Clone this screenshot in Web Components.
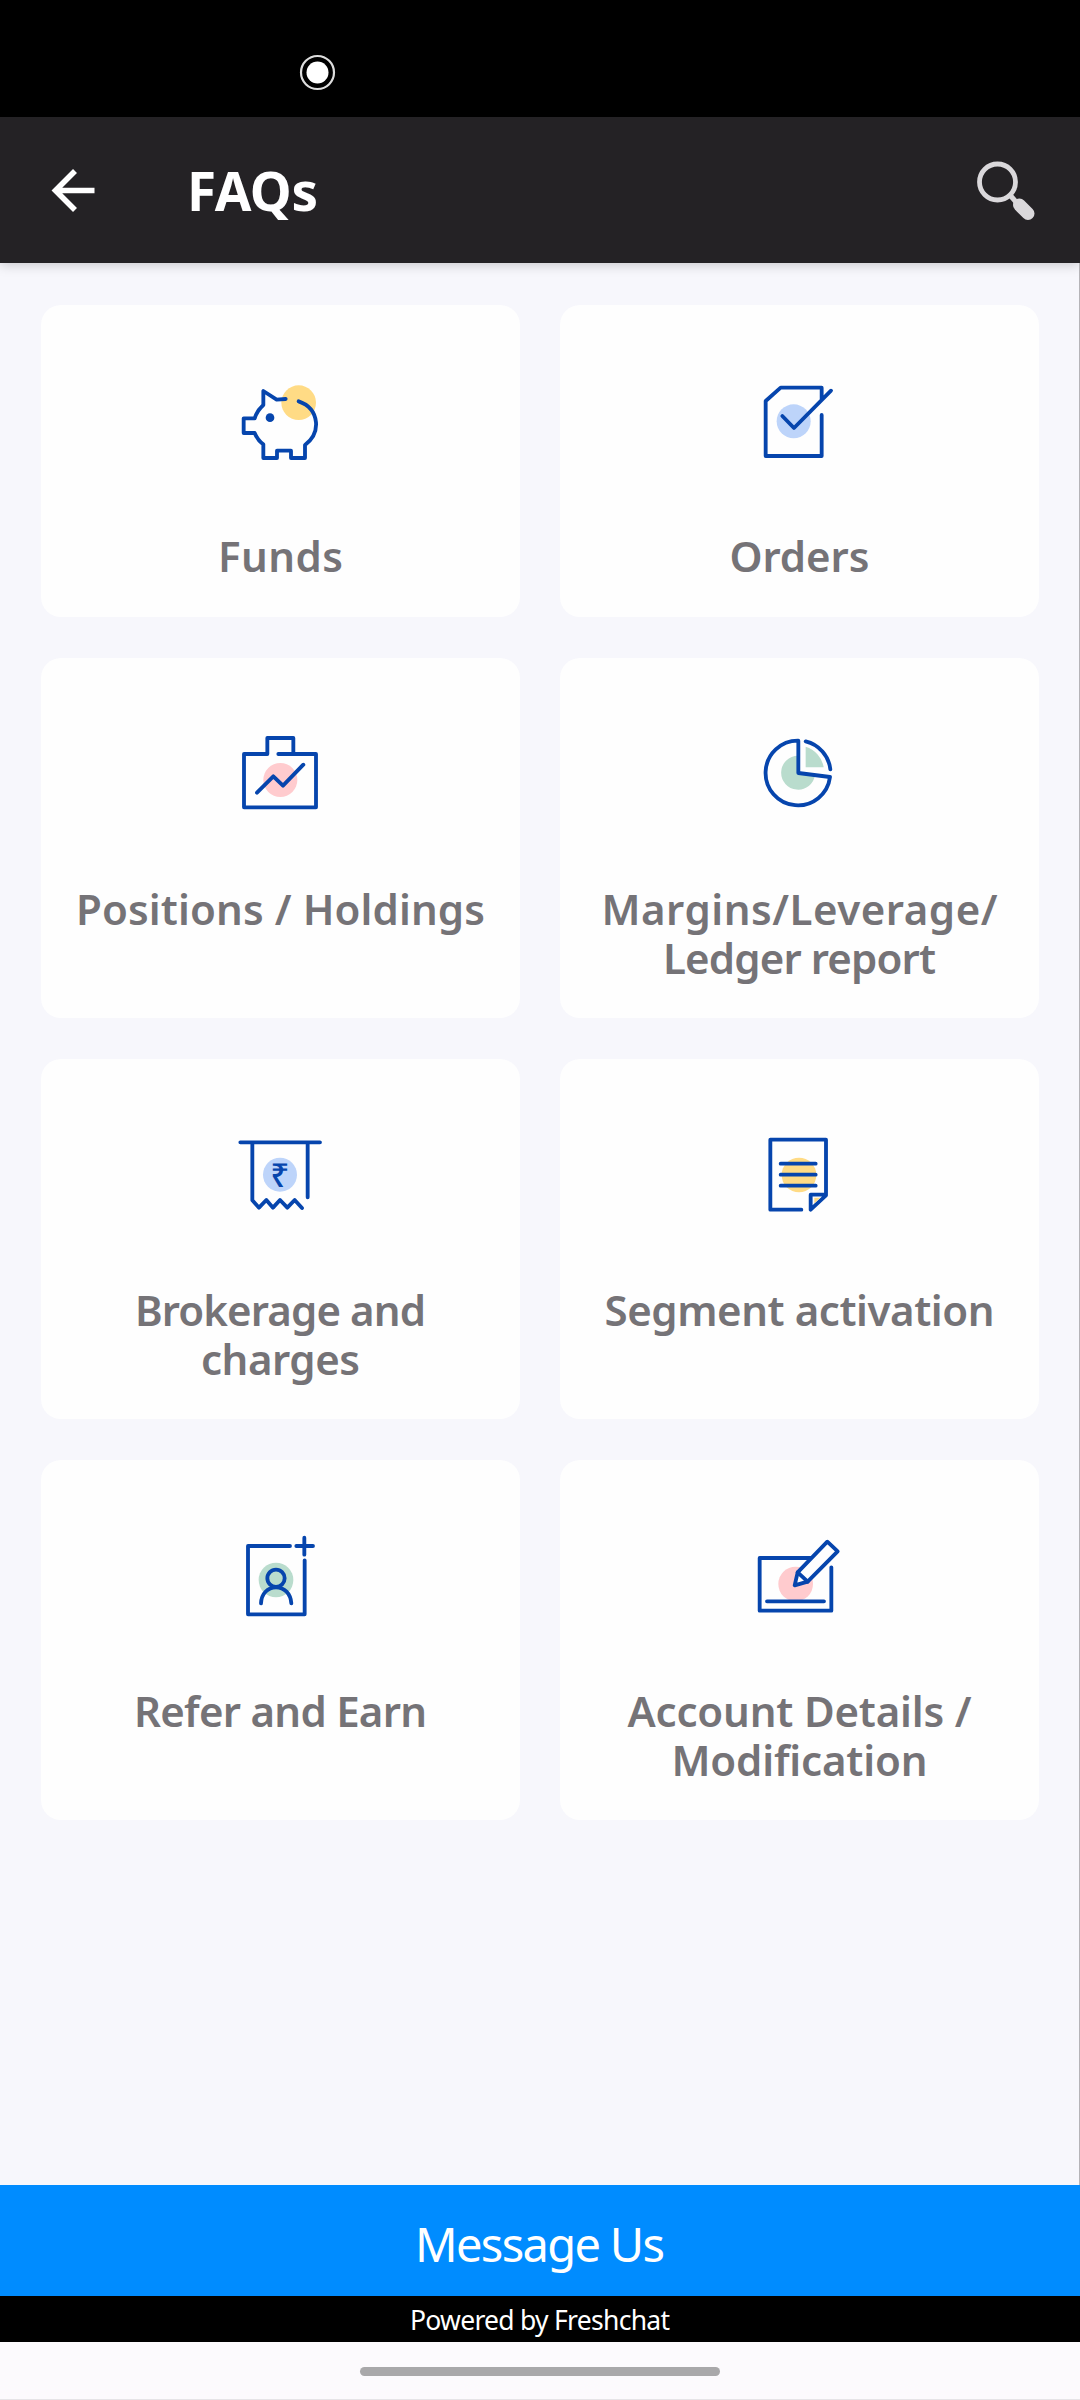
<!DOCTYPE html>
<html lang="en">
<head>
<meta charset="utf-8">
<title>FAQs</title>
<style>
body {
  margin: 0;
  font-family: "Noto Sans", "Open Sans", sans-serif;
}
</style>
</head>
<body>
<faq-screen>
  <app-bar slot="top"><fit-line width="131">FAQs</fit-line></app-bar>

  <faq-card icon="funds"><fit-line width="125">Funds</fit-line></faq-card>
  <faq-card icon="orders"><fit-line width="140">Orders</fit-line></faq-card>
  <faq-card icon="holdings"><fit-line width="409">Positions / Holdings</fit-line></faq-card>
  <faq-card icon="margins"><fit-line width="396">Margins/Leverage/</fit-line><fit-line width="273">Ledger report</fit-line></faq-card>
  <faq-card icon="charges"><fit-line width="291">Brokerage and</fit-line><fit-line width="159">charges</fit-line></faq-card>
  <faq-card icon="segment"><fit-line width="390">Segment activation</fit-line></faq-card>
  <faq-card icon="refer"><fit-line width="293">Refer and Earn</fit-line></faq-card>
  <faq-card icon="account"><fit-line width="344">Account Details /</fit-line><fit-line width="256">Modification</fit-line></faq-card>

  <chat-footer slot="bottom">
    <fit-line slot="action" width="250">Message Us</fit-line>
    <fit-line slot="credit" width="260">Powered by Freshchat</fit-line>
  </chat-footer>
</faq-screen>

<script>
// All icons share a 480x420 canvas, three units to a pixel
const ICONS = {
  funds: {
    top: 17,
    body: `
      <circle class="yellow" cx="296" cy="157" r="52"/>
      <path d="M257 146L230 148L190 122V164Q171 181 164 204H131V248H164Q173 270 190 282V323H231V301H273V323H315V284C340 265 350 242 348 216C345 185 325 163 296 153"/>
      <circle class="dot" cx="210" cy="202" r="13"/>`,
  },
  orders: {
    top: 17,
    body: `
      <circle class="blue" cx="224" cy="213" r="51"/>
      <path d="M308 145V112H185L140 152V317H308V194M190 197L225 233L336 121"/>`,
  },
  holdings: {
    top: -1,
    body: `
      <circle class="pink" cx="241" cy="212" r="51"/>
      <path d="M235 134H348V294H132V134H202V86H280V134M171 250L220 201L249 229L310 166"/>`,
  },
  margins: {
    top: -1,
    body: `
      <path class="green" d="M237 139A51 51 0 1 0 288 197L237 191ZM260 112A78 78 0 0 1 314 174H260Z"/>
      <path d="M238 94A97 97 0 1 0 333 203L238 191ZM260 96A97 97 0 0 1 334 180"/>`,
  },
  charges: {
    top: -1,
    body: `
      <circle class="blue" cx="240" cy="193" r="51"/>
      <path d="M121 96H360M323 96V261M157 96V270L177 292L199 269L219 292L240 269L262 292L284 269L306 293"/>
      <text x="240" y="229" text-anchor="middle">₹</text>`,
  },
  segment: {
    top: -1,
    body: `
      <circle class="yellow" cx="240" cy="194" r="52"/>
      <path d="M247 298H154V88H321V255L275 298V253H321"/>
      <path d="M185 160H290M185 193H290M185 226H290"/>
      <path class="yellow" d="M286 262H304L286 279Z"/>`,
  },
  refer: {
    top: 0,
    body: `
      <circle class="green" cx="228" cy="207" r="52"/>
      <path d="M270 105H144V310H314V148M289 105H339M313 80V131"/>
      <circle class="ring" cx="228" cy="202" r="26"/>
      <path d="M183 277C184 248 203 229 228 229S272 248 274 277"/>`,
  },
  account: {
    top: 0,
    body: `
      <circle class="pink" cx="230" cy="219" r="52"/>
      <path d="M275 141H122V299H337V169M144 271H315"/>
      <path class="paper" d="M227 223L236 184L325 92L356 121L266 212Z"/>
      <path d="M236 184L266 212"/>`,
  },
};

/* One line of text, tracked out or in to an exact width */
class FitLine extends HTMLElement {
  constructor() {
    super();
    this.attachShadow({ mode: 'open' }).innerHTML = /* html */ `
      <style>
      :host { display: block; white-space: nowrap; }
      span { display: inline-block; }
      </style>
      <span><slot></slot></span>
    `;
  }

  connectedCallback() {
    const span = this.shadowRoot.querySelector('span');
    const count = this.textContent.length;
    const spare = Number(this.getAttribute('width')) - span.getBoundingClientRect().width;
    const spacing = spare / (count - 1);
    span.style.letterSpacing = `${spacing}px`;
    span.style.marginRight = `${-spacing}px`;
  }
}

class AppBar extends HTMLElement {
  constructor() {
    super();
    this.attachShadow({ mode: 'open' }).innerHTML = /* html */ `
      <style>
      :host { display: block; color: white; }
      .status {
        height: 117px;
        box-sizing: border-box;
        padding: 54px 0 0 299px;
        background: #000;
      }
      .bar {
        height: 146px;
        box-sizing: border-box;
        display: flex;
        align-items: center;
        padding: 0 42px 0 48px;
        background: #242225;
        box-shadow: 0 1px 12px rgb(0 0 0 / 22%);
      }
      svg { display: block; fill: none; }
      .title {
        flex: 1;
        padding: 2px 0 0 89px;
        font-size: 53px;
        font-weight: 700;
        line-height: 70px;
      }
      </style>
      <div class="status">
        <svg width="37" height="37" viewBox="0 0 37 37">
          <circle cx="18.5" cy="18.5" r="16.5" stroke="#ddd" stroke-width="2.2"/>
          <circle cx="18.5" cy="18.5" r="11" fill="white"/>
        </svg>
      </div>
      <div class="bar">
        <svg width="50" height="50" viewBox="0 0 50 50" stroke="white" stroke-width="5.6">
          <path d="M46.500 25.500H8M27 6L7.500 25.500L27 45"/>
        </svg>
        <div class="title"><slot></slot></div>
        <svg width="64" height="64" viewBox="0 0 64 64">
          <circle cx="23.500" cy="24" r="18" stroke="#dad8db" stroke-width="4.8"/>
          <path d="M36 37L42 44" stroke="#dad8db" stroke-width="5"/>
          <path d="M45.500 47L54 55.500" stroke="#dad8db" stroke-width="13" stroke-linecap="round"/>
        </svg>
      </div>
    `;
  }
}

class FaqCard extends HTMLElement {
  constructor() {
    super();
    this.attachShadow({ mode: 'open' });
  }

  connectedCallback() {
    const icon = ICONS[this.getAttribute('icon')];
    this.shadowRoot.innerHTML = /* html */ `
      <style>
      :host {
        display: flex;
        flex-direction: column;
        align-items: center;
        box-sizing: border-box;
        padding: 51px 0 31px;
        border-radius: 20px;
        background: #fefefe;
        color: #757377;
        font-size: 42px;
        font-weight: 600;
        line-height: 49px;
        text-align: center;
      }
      svg {
        width: 160px;
        height: 140px;
        margin-bottom: 35px;
        fill: none;
        stroke: #0645ad;
        stroke-width: 11.5;
        stroke-linecap: round;
        stroke-linejoin: round;
      }
      .yellow { fill: #ffdb85; stroke: none; }
      .blue { fill: #bdd4fa; stroke: none; }
      .pink { fill: #ffcbce; stroke: none; }
      .green { fill: #b9dccd; stroke: none; }
      .dot { fill: #0645ad; stroke: none; }
      .paper { fill: #fefefe; }
      text { fill: #0645ad; stroke: none; font-size: 101px; font-weight: 500; }
      </style>
      <svg viewBox="3 ${icon.top} 480 420">${icon.body}</svg>
      <slot></slot>
    `;
  }
}

class ChatFooter extends HTMLElement {
  constructor() {
    super();
    this.attachShadow({ mode: 'open' }).innerHTML = /* html */ `
      <style>
      :host { display: block; color: white; text-align: center; }
      .action {
        height: 111px;
        background: #008cff;
        font-size: 47px;
        line-height: 119px;
      }
      .credit {
        height: 46px;
        background: #000;
        font-size: 26.5px;
        line-height: 48px;
      }
      .nav {
        height: 58px;
        box-sizing: border-box;
        display: flex;
        justify-content: center;
        padding-top: 25px;
        border-bottom: 1px solid #e6e4e7;
        background: #fcfafd;
      }
      .handle { width: 360px; height: 9px; border-radius: 5px; background: #a9a8aa; }
      </style>
      <div class="action"><slot name="action"></slot></div>
      <div class="credit"><slot name="credit"></slot></div>
      <div class="nav"><div class="handle"></div></div>
    `;
  }
}

class FaqScreen extends HTMLElement {
  constructor() {
    super();
    this.attachShadow({ mode: 'open' }).innerHTML = /* html */ `
      <style>
      :host {
        display: flex;
        flex-direction: column;
        width: 1080px;
        height: 2400px;
        overflow: hidden;
        background: #f7f7fc;
      }
      main {
        flex: 1;
        display: grid;
        grid-template-columns: 479px 479px;
        grid-template-rows: 312px 360px 360px 360px;
        column-gap: 40px;
        row-gap: 41px;
        padding: 42px 40px 0 41px;
        border-right: 1px solid #b5b4b8;
      }
      </style>
      <slot name="top"></slot>
      <main><slot></slot></main>
      <slot name="bottom"></slot>
    `;
  }
}

customElements.define('faq-screen', FaqScreen);
customElements.define('app-bar', AppBar);
customElements.define('faq-card', FaqCard);
customElements.define('chat-footer', ChatFooter);
// Measures its text, so it comes after the elements that set the font size
customElements.define('fit-line', FitLine);
</script>
</body>
</html>
